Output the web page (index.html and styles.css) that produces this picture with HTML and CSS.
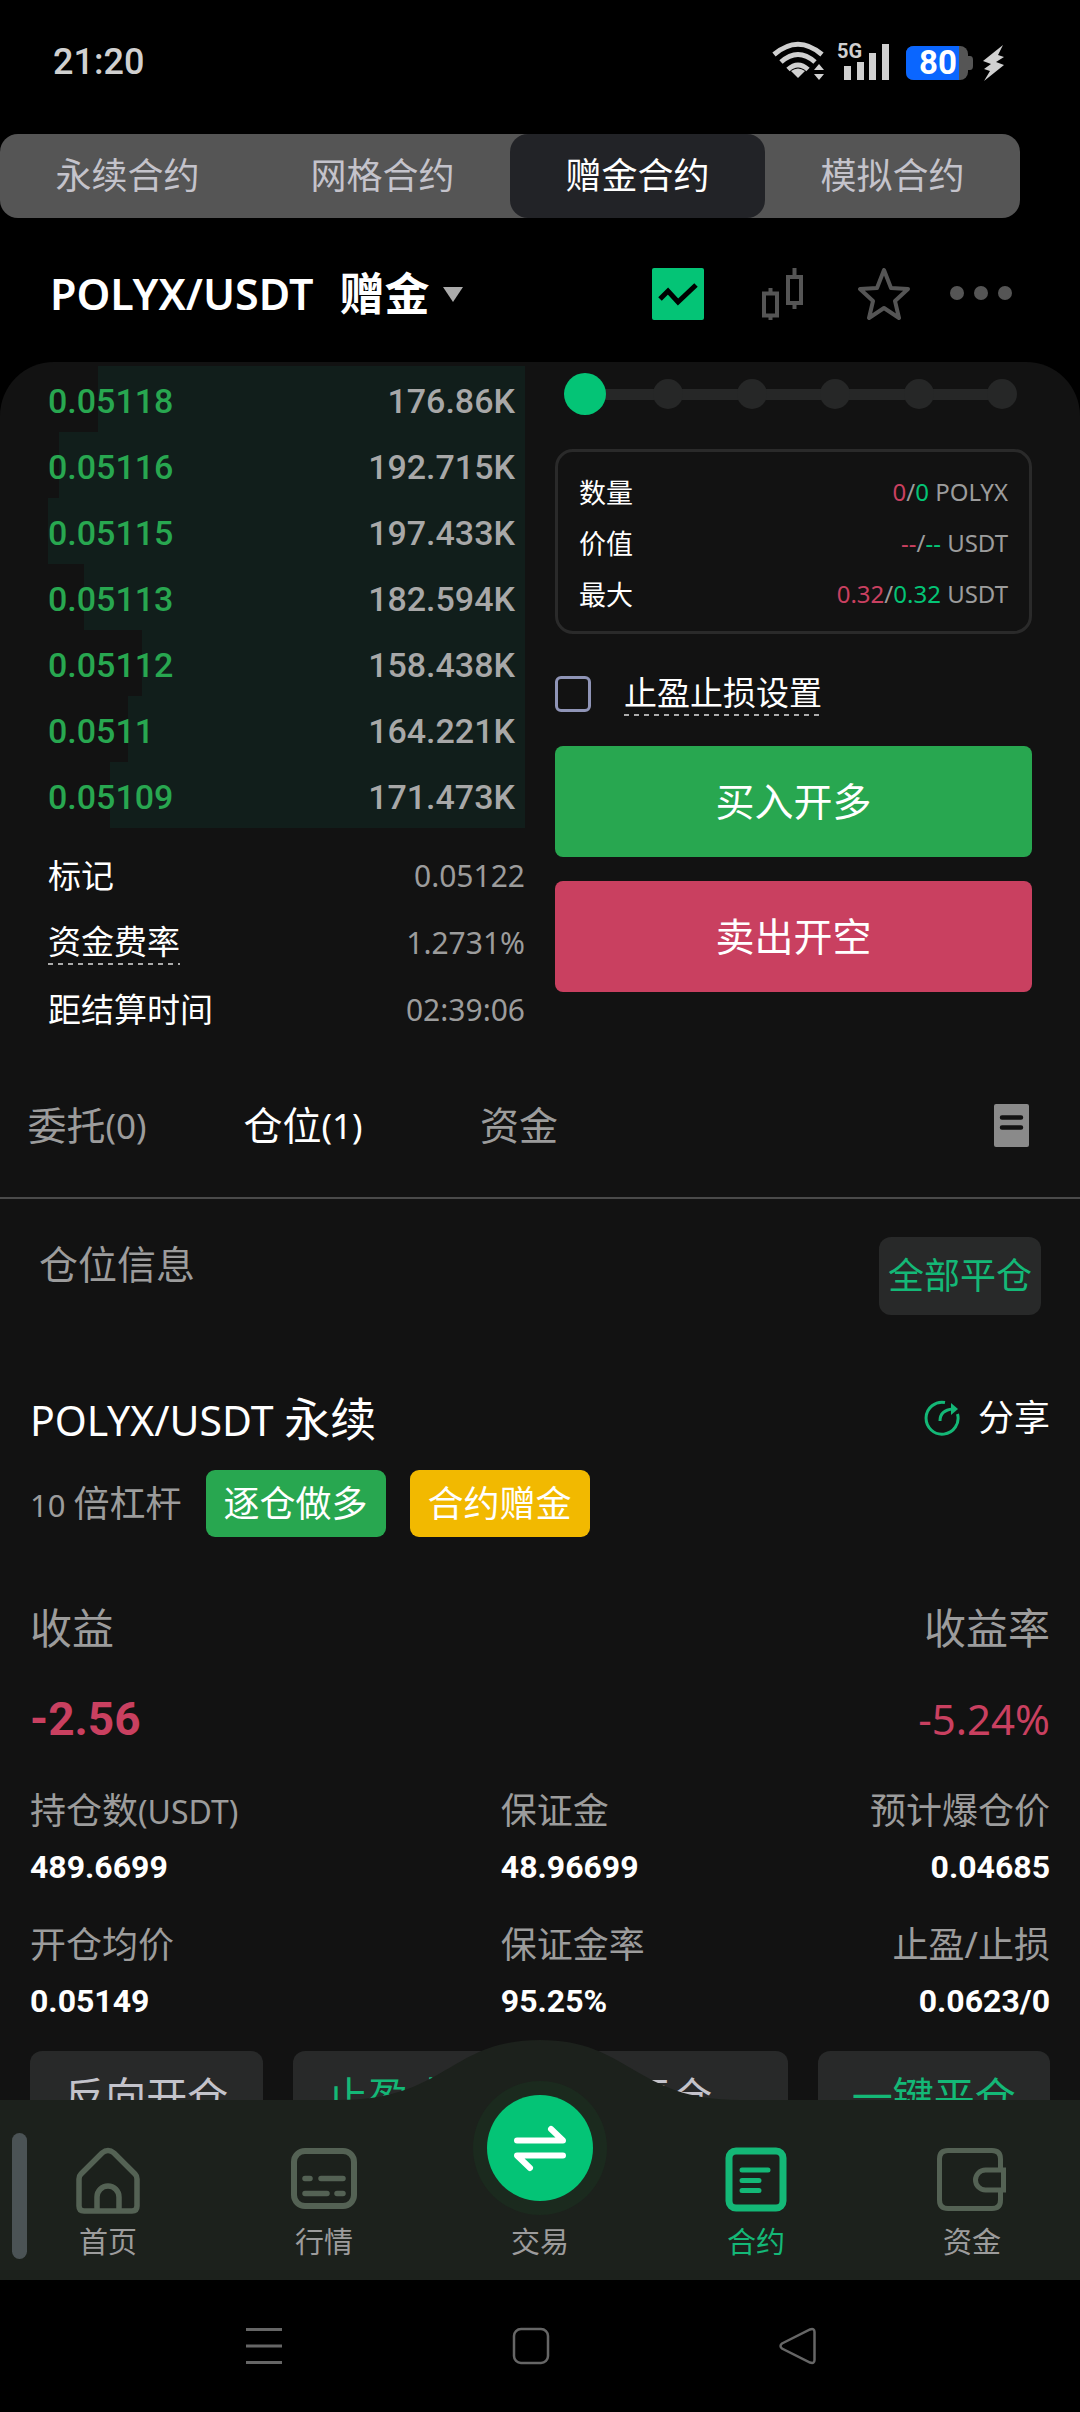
FILE: index.html
```html
<!DOCTYPE html>
<html lang="zh-CN">
<head>
<meta charset="utf-8">
<meta name="viewport" content="width=device-width, initial-scale=1">
<title>POLYX/USDT 赠金合约</title>
<link rel="stylesheet" href="styles.css">
</head>
<body>
<div class="app">
  <div class="status">
    <span class="clock">21:20</span>
    <svg class="status-icons" width="234" height="44" viewBox="0 0 234 44" role="img" aria-label="Wi-Fi, 5G, 80%">
      <g fill="none" stroke="#d0d0d0" stroke-width="5">
        <path d="M2 14.500Q26 -6 50 14.500"/>
        <path d="M9 22Q26 7 43 22"/>
        <path d="M16 29.500Q26 20.500 36 29.500"/>
      </g>
      <path d="M26 38L19 31Q26 26 33 31Z" fill="#d0d0d0"/>
      <path d="M47 24l5 6H42zM47 40l5-6H42z" fill="#d0d0d0"/>
      <text x="65" y="18" class="net">5G</text>
      <g fill="#d0d0d0">
        <rect x="72" y="26" width="7" height="14"/><rect x="85" y="22" width="7" height="18"/>
        <rect x="97" y="13" width="7" height="27"/><rect x="110" y="4" width="7" height="36"/>
      </g>
      <rect x="134" y="6" width="62" height="34" rx="8" fill="#555"/>
      <path d="M196 16h2q3 0 3 4v6q0 4-3 4h-2z" fill="#555"/>
      <path d="M142 6h45v34h-45q-8 0-8-8V14q0-8 8-8z" fill="#0a66ff"/>
      <text x="147" y="34" class="charge">80</text>
      <path d="M231 5L211 21l8 3-7 5 6 2-6 10 20-16-8-3 8-5-6-2z" fill="#d0d0d0"/>
    </svg>
  </div>

  <nav class="segments" aria-label="合约类型">
    <button type="button">永续合约</button>
    <button type="button">网格合约</button>
    <button type="button" class="on" aria-current="page">赠金合约</button>
    <button type="button">模拟合约</button>
  </nav>

  <header class="pair">
    <button type="button" class="pair-name"><span>POLYX/USDT</span><b>赠金</b><i class="caret"></i></button>
    <div class="tools">
      <button type="button" aria-label="走势"><svg width="52" height="52" viewBox="0 0 52 52"><rect width="52" height="52" rx="2" fill="#04c476"/><path d="M8 31l8-8 10 11 18-17" fill="none" stroke="#000" stroke-width="5"/></svg></button>
      <button type="button" aria-label="K线" class="kline"><svg width="44" height="52" viewBox="0 0 44 52" fill="none" stroke="#555" stroke-width="4"><path d="M4 25.500h13v22H4zM10.500 20v5M10.500 48v4M28 9h13v26H28zM34.500 0v9M34.500 35v6"/></svg></button>
      <button type="button" aria-label="收藏"><svg width="52" height="52" viewBox="0 0 52 52" fill="none" stroke="#555" stroke-width="4" stroke-linejoin="round"><path d="M26 2l7 18 17 1-13 12 4 17L26 40 11 50l4-17-13-12 17-1z"/></svg></button>
      <button type="button" aria-label="更多"><svg width="62" height="52" viewBox="0 0 62 52" fill="#555"><circle cx="7" cy="25" r="7"/><circle cx="31" cy="25" r="7"/><circle cx="55" cy="25" r="7"/></svg></button>
    </div>
  </header>

  <main class="panel">
    <div class="trade">
      <section class="book">
        <table class="depth">
          <tbody>
            <tr style="--depth:89.5%"><td>0.05118</td><td>176.86K</td></tr>
            <tr style="--depth:97.7%"><td>0.05116</td><td>192.715K</td></tr>
            <tr style="--depth:100%"><td>0.05115</td><td>197.433K</td></tr>
            <tr style="--depth:92.5%"><td>0.05113</td><td>182.594K</td></tr>
            <tr style="--depth:80.3%"><td>0.05112</td><td>158.438K</td></tr>
            <tr style="--depth:83.2%"><td>0.0511</td><td>164.221K</td></tr>
            <tr style="--depth:87%"><td>0.05109</td><td>171.473K</td></tr>
          </tbody>
        </table>
        <dl class="facts">
          <div><dt>标记</dt><dd>0.05122</dd></div>
          <div><dt class="hint">资金费率</dt><dd>1.2731%</dd></div>
          <div><dt>距结算时间</dt><dd>02:39:06</dd></div>
        </dl>
      </section>

      <section class="order">
        <div class="slider">
          <div class="stops"><i></i><i></i><i></i><i></i><i></i><i></i></div>
          <input type="range" min="0" max="100" step="20" value="0" aria-label="仓位比例">
        </div>
        <dl class="summary">
          <div><dt>数量</dt><dd><span class="down">0</span>/<span class="up">0</span> POLYX</dd></div>
          <div><dt>价值</dt><dd><span class="down">--</span>/<span class="up">--</span> USDT</dd></div>
          <div><dt>最大</dt><dd><span class="down">0.32</span>/<span class="up">0.32</span> USDT</dd></div>
        </dl>
        <div class="check">
          <input type="checkbox" id="tpsl">
          <label for="tpsl" class="hint">止盈止损设置</label>
        </div>
        <button type="button" class="submit buy">买入开多</button>
        <button type="button" class="submit sell">卖出开空</button>
      </section>
    </div>

    <div class="tabs">
      <button type="button">委托<small>(0)</small></button>
      <button type="button" class="on">仓位<small>(1)</small></button>
      <button type="button">资金</button>
      <button type="button" class="log" aria-label="历史记录"><svg width="35" height="43" viewBox="0 0 35 43"><rect width="35" height="43" rx="2" fill="#8a8a8a"/><path d="M8 13.500h19M8 23.500h19" stroke="#121212" stroke-width="4.500" stroke-linecap="round"/></svg></button>
    </div>

    <div class="section-head">
      <h2>仓位信息</h2>
      <button type="button">全部平仓</button>
    </div>

    <article class="position">
      <div class="line title">
        <h3><small>POLYX/USDT </small>永续</h3>
        <button type="button" class="share"><svg width="36" height="36" viewBox="0 0 36 36" fill="none" stroke="#14b877" stroke-width="3"><path d="M21 2.500A16 16 0 1 0 33.500 14"/><path d="M16 21q0-11 13-12"/><path d="M27 3l7 6-7 6z" fill="#14b877" stroke="none"/></svg>分享</button>
      </div>
      <div class="tags">
        <span class="lever"><small>10 </small>倍杠杆</span>
        <span class="tag long">逐仓做多</span>
        <span class="tag bonus">合约赠金</span>
      </div>
      <div class="line gain-label"><span>收益</span><span>收益率</span></div>
      <div class="line gain"><strong>-2.56</strong><span>-5.24%</span></div>
      <dl class="stats">
        <div><dt>持仓数<small>(USDT)</small></dt><dd>489.6699</dd></div>
        <div><dt>保证金</dt><dd>48.96699</dd></div>
        <div><dt>预计爆仓价</dt><dd>0.04685</dd></div>
        <div><dt>开仓均价</dt><dd>0.05149</dd></div>
        <div><dt>保证金率</dt><dd>95.25%</dd></div>
        <div><dt>止盈/止损</dt><dd>0.0623/0</dd></div>
      </dl>
      <div class="actions">
        <button type="button">反向开仓</button>
        <button type="button" class="accent">止盈止损</button>
        <button type="button">平仓</button>
        <button type="button" class="accent">一键平仓</button>
      </div>
    </article>
  </main>

  <nav class="tabbar" aria-label="主导航">
    <svg class="hump" width="400" height="61" viewBox="0 0 400 61"><path d="M0 60C106 60 110 0 200 0S294 60 400 60V61H0z" fill="#1c211c"/></svg>
    <i class="handle"></i>
    <a href="#home"><svg width="72" height="72" viewBox="0 0 72 72" fill="none" stroke="#546254" stroke-width="5.500"><path d="M7 36Q7 33 9 31L30 10Q36 5 42 10L63 31Q65 33 65 36V63Q65 68 60 68H12Q7 68 7 63Z"/><path d="M25 68V54a11 11 0 0 1 22 0V68"/></svg>首页</a>
    <a href="#market"><svg width="72" height="72" viewBox="0 0 72 72" fill="none" stroke="#546254" stroke-width="6"><rect x="6" y="8" width="60" height="55" rx="11"/><path d="M17 35.500h5M33 35.500h22M17 50.500h22M49 50.500h6" stroke-width="5.500" stroke-linecap="round"/></svg>行情</a>
    <a href="#trade"><svg width="134" height="134" viewBox="0 0 134 134"><circle cx="67" cy="67" r="67" fill="#1b2a1e"/><circle cx="67" cy="67" r="53" fill="#04c476"/><path d="M44 59.500H90L78 48M90 74.500H44L57 87" fill="none" stroke="#fff" stroke-width="6" stroke-linecap="round" stroke-linejoin="round"/></svg>交易</a>
    <a href="#futures" class="on"><svg width="72" height="72" viewBox="0 0 72 72" fill="none" stroke="#14b877" stroke-width="7"><rect x="9" y="8" width="54" height="57" rx="7"/><path d="M22 27h26M22 37.500h17M22 47.500h17" stroke-width="5" stroke-linecap="round"/></svg>合约</a>
    <a href="#assets"><svg width="72" height="72" viewBox="0 0 72 72" fill="none" stroke="#546254" stroke-width="5"><path d="M64.500 28V16Q64.500 7.500 56 7.500H12Q3.500 7.500 3.500 16V57Q3.500 65.500 12 65.500H56Q64.500 65.500 64.500 57V46"/><path d="M67.500 27H49.500a10 10 0 0 0 0 20H67.500z"/></svg>资金</a>
  </nav>

  <div class="sysbar">
    <button type="button" aria-label="最近任务"><svg width="38" height="38" viewBox="0 0 38 38" fill="none" stroke="#666" stroke-width="3"><path d="M1 2.500h36M1 19h36M1 35.500h36"/></svg></button>
    <button type="button" aria-label="主屏幕"><svg width="38" height="38" viewBox="0 0 38 38" fill="none" stroke="#666" stroke-width="2.500"><rect x="2" y="2" width="34" height="34" rx="7"/></svg></button>
    <button type="button" aria-label="返回"><svg width="38" height="38" viewBox="0 0 38 38" fill="none" stroke="#666" stroke-width="2.500"><path d="M3 16.500L31 2.500Q35.500 1 35.500 5V33Q35.500 37 31 35.500L3 21.500Q0 19 3 16.500z"/></svg></button>
  </div>
</div>
</body>
</html>
```
FILE: styles.css
```css
* { box-sizing: border-box; margin: 0; padding: 0; }

:root {
  --up: #04c476;
  --green: #28a750;
  --accent: #14b877;
  --down: #c94060;
  --muted: #9c9c9c;
  --card: #282929;
  --panel: #121212;
  --bar: #1c211c;
}

body {
  background: #000;
  color: #fff;
  font-family: "Noto Sans", "Noto Sans CJK SC", sans-serif;
  white-space: nowrap;
}

button {
  background: none;
  border: 0;
  color: inherit;
  font: inherit;
  line-height: 1.2;
  white-space: nowrap;
}

button, a { display: flex; align-items: center; justify-content: center; }
svg { display: block; flex: none; }
a { color: inherit; text-decoration: none; }
h2, h3 { font-weight: 400; }
small { line-height: 1; }

.app { display: flex; flex-direction: column; height: 100vh; overflow: hidden; }

/* Status bar */
.status { display: flex; justify-content: space-between; padding: 40px 74px 50px 53px; line-height: 44px; }
.clock { color: #d0d0d0; font: 500 36px/44px Roboto, sans-serif; }
.net { fill: #d0d0d0; font: 700 20px Roboto, sans-serif; }
.charge { fill: #fff; font: 700 33px Roboto, sans-serif; }

/* Contract type switch */
.segments {
  display: grid;
  grid-template-columns: repeat(4, 1fr);
  margin-right: 60px;
  border-radius: 18px;
  background: #555;
  color: #c4c3cb;
}
.segments button { height: 84px; border-radius: 18px; font-size: 36px; }
.segments .on { background: #222327; color: #fff; }

/* Pair header */
.pair { display: flex; justify-content: space-between; align-items: center; padding: 50px 68px 42px 50px; }
.pair-name { height: 52px; font-size: 43px; font-weight: 600; }
.pair-name b { margin-left: 26px; font-size: 45px; font-weight: 700; }
.caret {
  margin-left: 14px;
  border: 10px solid transparent;
  border-top: 15px solid #aaa;
  border-bottom: 0;
}
.tools { display: flex; gap: 40px; }
.kline { margin: 0 14px 0 16px; }

/* Panel */
.panel {
  flex: 1;
  min-height: 0;
  overflow: hidden;
  border-radius: 54px 54px 0 0;
  background: var(--panel);
}
.trade { display: grid; grid-template-columns: 1fr 1fr; gap: 30px; padding: 4px 48px 0; }

.depth { width: 100%; border-collapse: collapse; font: 500 34px/40px Roboto, sans-serif; }
.depth tr {
  height: 66px;
  background: linear-gradient(#111e1b, #111e1b) right / var(--depth) 100% no-repeat;
}
.depth td { padding-top: 3px; }
.depth td:first-child { color: var(--green); }
.depth td:last-child { padding-right: 10px; color: #a8a8a8; text-align: right; }

.facts { margin-top: 14px; }
.facts div { display: flex; align-items: center; justify-content: space-between; height: 67px; }
.facts dt { font-size: 33px; line-height: 42px; }
.facts dd { color: var(--muted); font-size: 30px; line-height: 42px; }

.hint {
  padding-bottom: 2px;
  background: repeating-linear-gradient(90deg, #aaa 0 5px, transparent 5px 10px) bottom / 100% 2px no-repeat;
}

.slider { display: grid; align-items: center; margin: 7px 9px 34px; }
.slider > * { grid-area: 1 / 1; }
.stops {
  display: flex;
  justify-content: space-between;
  margin: 0 6px;
  background: linear-gradient(#262727, #262727) center / 94% 11px no-repeat;
}
.stops i { width: 30px; height: 30px; border-radius: 50%; background: #262727; }
.slider input { width: 100%; height: 42px; appearance: none; background: none; }
.slider input::-webkit-slider-thumb { appearance: none; width: 42px; height: 42px; border-radius: 50%; background: var(--up); }

.summary { padding: 14px 21px 12px; border: 3px solid #2a2a2a; border-radius: 18px; }
.summary div { display: flex; align-items: center; justify-content: space-between; height: 51px; }
.summary dt { font-size: 27px; }
.summary dd { color: var(--muted); font-size: 24px; }
.up { color: var(--up); }
.down { color: var(--down); }

.check { display: flex; align-items: center; gap: 33px; margin: 38px 0 30px; }
.check input { appearance: none; width: 36px; height: 36px; border: 3px solid #8f94b6; border-radius: 6px; }
.check label { font-size: 33px; line-height: 42px; }

.submit { width: 100%; height: 111px; border-radius: 8px; font-size: 39px; }
.buy { background: var(--green); }
.sell { margin-top: 24px; background: var(--down); }

/* Tabs above the list */
.tabs { display: flex; padding: 10px 51px 0 0; border-bottom: 2px solid #4a4a4a; color: var(--muted); }
.tabs button { width: 216px; height: 144px; font-size: 39px; }
.tabs button:first-child { width: 195px; padding-right: 21px; }
.tabs small { font-size: 35px; }
.tabs .on { color: #fff; }
.tabs .log { width: auto; margin-left: auto; }

.section-head { display: flex; justify-content: space-between; align-items: flex-start; padding: 38px 39px 0; }
.section-head h2 { color: var(--muted); font-size: 39px; line-height: 54px; }
.section-head button { height: 78px; padding: 0 9px; border-radius: 12px; background: var(--card); color: var(--accent); font-size: 36px; }

/* Position card */
.position { padding: 73px 30px 0; }
.line { display: flex; justify-content: space-between; height: 60px; line-height: 60px; }
.title h3 { font-size: 46px; }
.title small { font-size: 41px; }
.share { gap: 18px; font-size: 36px; }
.tags { display: flex; align-items: center; gap: 24px; height: 67px; margin-top: 22px; font-size: 36px; line-height: 67px; }
.tags small { font-size: 31px; }
.lever { color: var(--muted); }
.tag { padding: 0 18px; border-radius: 9px; }
.long { background: var(--green); }
.bonus { background: #f2b900; }
.gain-label { margin-top: 61px; color: var(--muted); font-size: 42px; }
.gain { margin-top: 31px; color: var(--down); font-size: 42px; }
.gain strong { font-family: Roboto, sans-serif; font-size: 46px; font-weight: 700; }

.stats { display: grid; grid-template-columns: 6fr 4fr 3fr; row-gap: 30px; margin-top: 36px; }
.stats div:nth-child(3n) { text-align: right; }
.stats dt { height: 52px; color: var(--muted); font-size: 36px; line-height: 52px; }
.stats small { font-size: 32px; }
.stats dd { margin-top: 8px; font: 700 32px/44px Roboto, sans-serif; }

.actions { display: grid; grid-template-columns: repeat(4, 1fr); gap: 30px; margin-top: 28px; }
.actions button { height: 92px; border-radius: 12px; background: var(--card); color: #c4c3cb; font-size: 41px; }
.actions .accent { color: var(--accent); }

/* Bottom navigation */
.tabbar {
  position: relative;
  display: grid;
  grid-template: 180px / repeat(5, 1fr);
  background: var(--bar);
  color: var(--muted);
  font-size: 29px;
  line-height: 42px;
}
.hump { position: absolute; bottom: 179px; left: 50%; margin-left: -200px; }
.handle { position: absolute; top: 33px; left: 12px; width: 15px; height: 126px; border-radius: 8px; background: #4b5355; }
.tabbar a { position: relative; flex-direction: column; justify-content: flex-end; gap: 6px; padding-bottom: 17px; }
.tabbar .on { color: var(--accent); }

/* System navigation */
.sysbar { display: grid; grid-template-columns: repeat(3, 1fr); height: 132px; padding: 0 148px 0 130px; }
```
